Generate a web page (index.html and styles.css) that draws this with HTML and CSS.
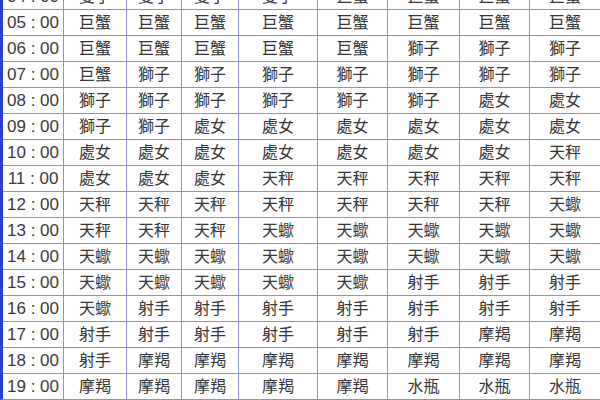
FILE: index.html
```html
<!DOCTYPE html>
<html lang="zh-Hant">
<head>
<meta charset="utf-8">
<link rel="stylesheet" href="styles.css">
</head>
<body>
<div class="grid">
<div class="t">04 : 00</div><div>雙子</div><div>雙子</div><div>雙子</div><div>雙子</div><div>巨蟹</div><div>巨蟹</div><div>巨蟹</div><div>巨蟹</div>
<div class="t">05 : 00</div><div>巨蟹</div><div>巨蟹</div><div>巨蟹</div><div>巨蟹</div><div>巨蟹</div><div>巨蟹</div><div>巨蟹</div><div>巨蟹</div>
<div class="t">06 : 00</div><div>巨蟹</div><div>巨蟹</div><div>巨蟹</div><div>巨蟹</div><div>巨蟹</div><div>獅子</div><div>獅子</div><div>獅子</div>
<div class="t">07 : 00</div><div>巨蟹</div><div>獅子</div><div>獅子</div><div>獅子</div><div>獅子</div><div>獅子</div><div>獅子</div><div>獅子</div>
<div class="t">08 : 00</div><div>獅子</div><div>獅子</div><div>獅子</div><div>獅子</div><div>獅子</div><div>獅子</div><div>處女</div><div>處女</div>
<div class="t">09 : 00</div><div>獅子</div><div>獅子</div><div>處女</div><div>處女</div><div>處女</div><div>處女</div><div>處女</div><div>處女</div>
<div class="t">10 : 00</div><div>處女</div><div>處女</div><div>處女</div><div>處女</div><div>處女</div><div>處女</div><div>處女</div><div>天秤</div>
<div class="t">11 : 00</div><div>處女</div><div>處女</div><div>處女</div><div>天秤</div><div>天秤</div><div>天秤</div><div>天秤</div><div>天秤</div>
<div class="t">12 : 00</div><div>天秤</div><div>天秤</div><div>天秤</div><div>天秤</div><div>天秤</div><div>天秤</div><div>天秤</div><div>天蠍</div>
<div class="t">13 : 00</div><div>天秤</div><div>天秤</div><div>天秤</div><div>天蠍</div><div>天蠍</div><div>天蠍</div><div>天蠍</div><div>天蠍</div>
<div class="t">14 : 00</div><div>天蠍</div><div>天蠍</div><div>天蠍</div><div>天蠍</div><div>天蠍</div><div>天蠍</div><div>天蠍</div><div>天蠍</div>
<div class="t">15 : 00</div><div>天蠍</div><div>天蠍</div><div>天蠍</div><div>天蠍</div><div>天蠍</div><div>射手</div><div>射手</div><div>射手</div>
<div class="t">16 : 00</div><div>天蠍</div><div>射手</div><div>射手</div><div>射手</div><div>射手</div><div>射手</div><div>射手</div><div>射手</div>
<div class="t">17 : 00</div><div>射手</div><div>射手</div><div>射手</div><div>射手</div><div>射手</div><div>射手</div><div>摩羯</div><div>摩羯</div>
<div class="t">18 : 00</div><div>射手</div><div>摩羯</div><div>摩羯</div><div>摩羯</div><div>摩羯</div><div>摩羯</div><div>摩羯</div><div>摩羯</div>
<div class="t">19 : 00</div><div>摩羯</div><div>摩羯</div><div>摩羯</div><div>摩羯</div><div>摩羯</div><div>水瓶</div><div>水瓶</div><div>水瓶</div>
</div>
</body>
</html>
```

FILE: styles.css
```css
html, body {
  margin: 0;
  padding: 0;
  width: 600px;
  height: 400px;
  overflow: hidden;
  background: #ffffff;
}
.grid {
  margin-top: -16px;
  display: grid;
  grid-template-columns: 60px 62px 54px 56px 78px 69px 71px 69px 70px;
  grid-auto-rows: 25px;
  gap: 1px;
  background: #8e8ed2;
  border-left: 3px solid #2a3fcf;
  border-bottom: 1px solid #8e8ed2;
  font-family: "Liberation Sans", "Noto Sans CJK TC", sans-serif;
  font-size: 16px;
  color: #363636;
}
.grid > div {
  background: #ffffff;
  display: flex;
  align-items: center;
  justify-content: center;
  white-space: pre;
  line-height: 1;
}
.grid > .t {
  font-size: 17px;
  color: #3a3a3a;
}
```
